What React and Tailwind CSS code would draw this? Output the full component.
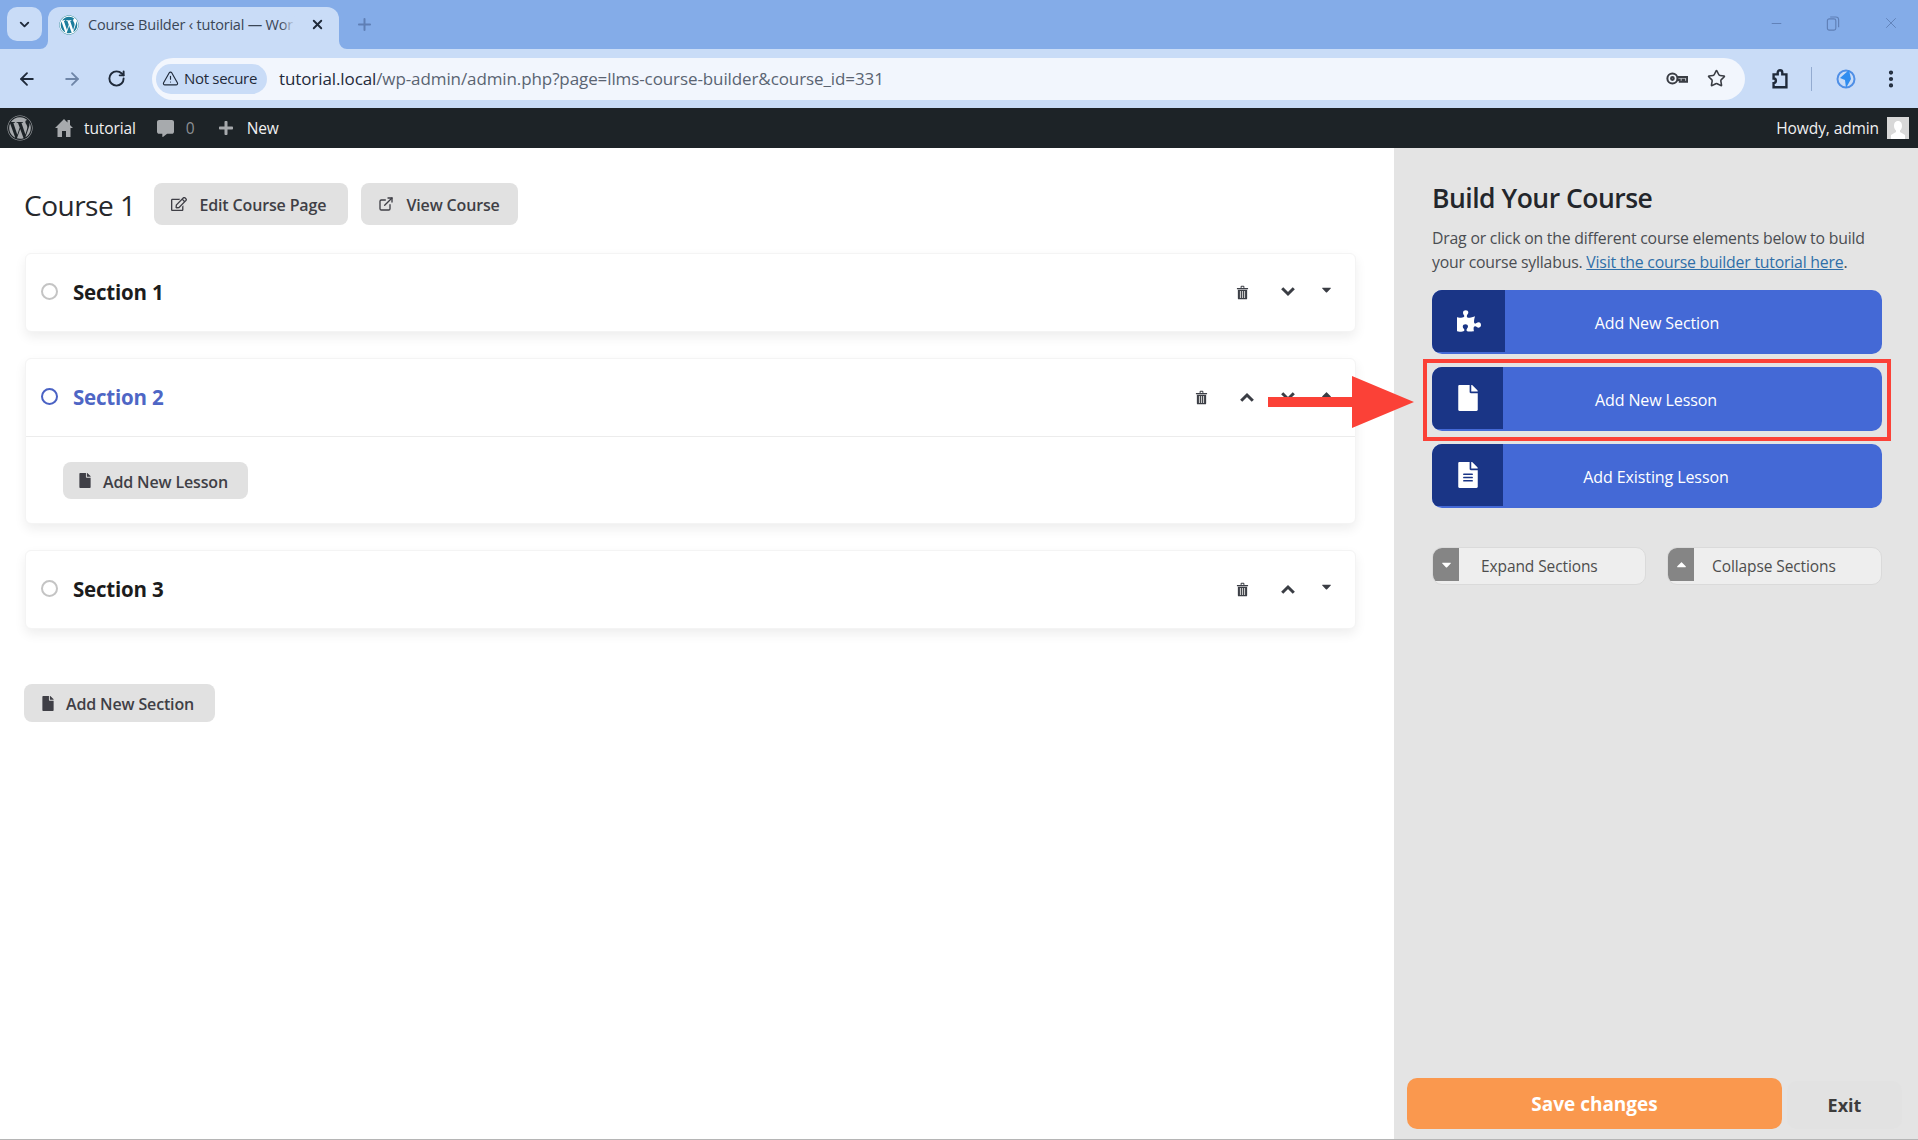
import React from 'react';
import { ArrowLeft, ArrowRight, RotateCw, TriangleAlert, ChevronDown, X, Plus, Star, Minus, EllipsisVertical, ExternalLink } from 'lucide-react';
import { FaWordpress, FaPuzzlePiece, FaFile, FaFileAlt, FaCaretDown, FaCaretUp, FaRegEdit, FaPlus, FaCommentAlt } from 'react-icons/fa';

const font = "font-['Open_Sans','Noto_Sans',sans-serif]";

const TrashIcon = () => (
  <svg viewBox="0 0 14 16" className="w-[13px] h-[15px]">
    <path d="M1 3.2h12v1.4H1zM5 3.2V1.600C5 1 5.400.7 6 .7h2c.6 0 1 .3 1 .9v1.600H8V1.800H6v1.400z" fill="#3c3f46" />
    <path d="M2 5h10v9.400c0 .6-.4 1-1 1H3c-.6 0-1-.4-1-1z" fill="#3c3f46" />
    <path d="M4.200 6.400h1.200v7.400H4.200zM6.400 6.400h1.200v7.400H6.400zM8.600 6.400h1.200v7.400H8.600z" fill="#c9c9c9" />
  </svg>
);

const Chevron = ({ up }) => (
  <svg viewBox="0 0 14 10" className="h-[10px] w-[14px]" fill="none" stroke="currentColor" strokeWidth="3">
    <path d={up ? 'M1.200 8.800 7 3l5.800 5.800' : 'M1.200 1.200 7 7l5.800-5.800'} />
  </svg>
);

const sections = [
  { name: 'Section 1', arrows: ['down'] },
  { name: 'Section 2', arrows: ['up', 'down'], open: true },
  { name: 'Section 3', arrows: ['up'] },
];

const GreyButton = ({ icon, label, className = '' }) => (
  <button className={`flex items-center gap-[12px] rounded-lg bg-[#e1e1e1] text-[16px] font-semibold tracking-[-0.15px] text-[#3f3f46] ${className}`}>
    {icon}
    <span className="pt-[2px]">{label}</span>
  </button>
);

const SectionCard = ({ section }) => (
  <div className="rounded-md bg-white border border-[#f4f4f4] shadow-[0_5px_12px_rgba(0,0,0,0.07)]">
    <div className={`flex items-center pl-[15px] pr-[17px] ${section.open ? 'h-[78px] border-b border-[#ececec]' : 'h-[77px]'}`}>
      <span className={`h-[17px] w-[17px] rounded-full -mt-[2px] ${section.open ? 'border-2 border-[#4a62c4]' : 'border-2 border-[#c4c4c4]'}`} />
      <span className={`ml-[15px] text-[20.5px] font-bold tracking-[-0.2px] ${section.open ? 'text-[#4e66c5]' : 'text-[#1c1c1c]'}`}>{section.name}</span>
      <div className="ml-auto flex items-center text-[#3a3d44]">
        <span className="flex w-6 justify-center"><TrashIcon /></span>
        {section.arrows.map((a, i) => (
          <span key={a} className={`flex w-6 justify-center -mt-[2px] ${i === 0 ? 'ml-[22px]' : 'ml-[17px]'}`}>
            <Chevron up={a === 'up'} />
          </span>
        ))}
        <span className="ml-[14px] flex w-6 justify-center -mt-[6px]">
          {section.open ? <FaCaretUp className="h-[15px] w-[15px]" /> : <FaCaretDown className="h-[15px] w-[15px]" />}
        </span>
      </div>
    </div>
    {section.open && (
      <div className="h-[86px] pl-[37px] pt-[25px]">
        <GreyButton icon={<FaFile className="h-[15px] w-[12px]" />} label="Add New Lesson" className="h-[37px] w-[185px] pl-[16px]" />
      </div>
    )}
  </div>
);

const BlueButton = ({ icon, label, iconWidth }) => (
  <button className="flex h-[64px] overflow-hidden rounded-[10px] bg-[#4469d6] text-white">
    <span className={`flex h-[62px] items-center justify-center bg-[#1a3586] ${iconWidth}`}>{icon}</span>
    <span className="flex h-full flex-1 items-center justify-center pr-[73px] pt-[2px] text-[16px] tracking-[-0.1px]">{label}</span>
  </button>
);

const ToggleButton = ({ icon, label, width, pad }) => (
  <button className={`flex h-[38px] overflow-hidden rounded-[10px] border border-[#dadada] bg-[#eeeeee] text-[15.5px] tracking-[-0.1px] text-[#4d4d4d] ${width}`}>
    <span className="flex h-[33px] w-[26px] items-center justify-center bg-[#858585] text-white">{icon}</span>
    <span className={`pt-[7px] ${pad}`}>{label}</span>
  </button>
);

export default function App() {
  return (
    <div className={`relative flex h-[1140px] w-[1918px] flex-col overflow-hidden bg-white ${font}`}>
      {/* browser tabs */}
      <div className="flex h-[49px] shrink-0 items-end bg-[#84ace8] pl-[7px]">
        <div className="mb-[8px] flex h-[34px] w-[35px] items-center justify-center rounded-[10px] bg-[#c9dcf7]">
          <ChevronDown className="h-[15px] w-[15px] text-[#1f2a3a]" strokeWidth={3} />
        </div>
        <div className="relative ml-[6px] flex h-[42px] w-[291px] items-center rounded-t-[12px] bg-[#c9dcf7] pb-[7px] pl-[11px] pr-[14px]">
          <svg viewBox="0 0 8 8" className="absolute -left-[8px] bottom-0 h-[8px] w-[8px]"><path d="M8 0v8H0a8 8 0 0 0 8-8z" fill="#c9dcf7" /></svg>
          <svg viewBox="0 0 8 8" className="absolute -right-[8px] bottom-0 h-[8px] w-[8px]"><path d="M0 0v8h8a8 8 0 0 1-8-8z" fill="#c9dcf7" /></svg>
          <span className="rounded-full bg-white"><FaWordpress className="h-[20px] w-[20px] text-[#1c7d9c]" /></span>
          <span className="relative ml-[9px] w-[207px] overflow-hidden whitespace-nowrap text-[14.5px] tracking-[-0.2px] text-[#3a4656]">
            Course Builder ‹ tutorial — Wor
            <span className="absolute inset-y-0 right-0 w-[14px] bg-gradient-to-r from-transparent to-[#c9dcf7]" />
          </span>
          <X className="ml-auto h-[15px] w-[15px] text-[#1f2a3a]" strokeWidth={3} />
        </div>
        <Plus className="mb-[15px] ml-[16px] h-[19px] w-[19px] text-[#5f7fb5]" strokeWidth={2.5} />
        <div className="mb-[17px] ml-auto flex items-center gap-[42px] pr-[18px] text-[#5f7fb5]">
          <Minus className="h-[15px] w-[15px]" strokeWidth={1.5} />
          <svg viewBox="0 0 14 16" className="h-[15px] w-[14px]" fill="none" stroke="currentColor" strokeWidth="1.2"><rect x="1" y="3" width="9" height="12" rx="2" /><path d="M4 1h6c2 0 3 1 3 3v8" /></svg>
          <X className="h-[18px] w-[18px]" strokeWidth={1.2} />
        </div>
      </div>

      {/* browser toolbar */}
      <div className="flex h-[59px] shrink-0 items-center bg-[#c9dcf7] pl-[17px]">
        <ArrowLeft className="h-[20px] w-[20px] text-[#1f2a3a]" strokeWidth={2.2} />
        <ArrowRight className="ml-[25px] h-[20px] w-[20px] text-[#6f86a8]" strokeWidth={2.2} />
        <RotateCw className="ml-[25px] h-[19px] w-[19px] text-[#1f2a3a]" strokeWidth={2.4} />
        <div className="ml-[26px] flex h-[42px] w-[1593px] items-center rounded-full bg-[#f2f6fd] pl-[4px] pr-[19px]">
          <div className="flex h-[30px] w-[111px] items-center gap-[5px] rounded-full bg-[#c9dcf7] pl-[6px] text-[15px] tracking-[-0.3px] text-[#1f2a3a]">
            <TriangleAlert className="h-[17px] w-[17px]" strokeWidth={1.6} />
            Not secure
          </div>
          <span className="ml-[12px] text-[17px] tracking-[-0.1px] text-[#5a6472]"><span className="text-[#1f2a3a]">tutorial.local</span>/wp-admin/admin.php?page=llms-course-builder&amp;course_id=331</span>
          <svg viewBox="0 0 24 16" className="ml-auto h-[15px] w-[22px]" fill="none" stroke="#3a3d44" strokeWidth="2.200"><circle cx="7" cy="8" r="5.500" /><circle cx="7" cy="8" r="1.500" /><path d="M12.500 6.500H23v5h-3v-2h-2v2h-3V9.500h-2.500" /></svg>
          <Star className="ml-[19px] h-[19px] w-[19px] text-[#3a3d44]" strokeWidth={2} />
        </div>
        <svg viewBox="0 0 24 24" className="ml-[24px] h-[22px] w-[22px]" fill="none" stroke="#1f2a3a" strokeWidth="2.600">
          <path d="M5 7h4.500V5a2.500 2.500 0 0 1 5 0v2H19v14H5v-4.500a2.500 2.500 0 0 0 0-5z" />
        </svg>
        <span className="ml-[20px] h-[24px] w-px bg-[#93abd0]" />
        <svg viewBox="0 0 20 20" className="ml-[24px] h-[20px] w-[20px]"><circle cx="10" cy="10" r="8.500" fill="none" stroke="#4f8fe6" strokeWidth="2" /><path d="M13 1 15 10 10 19 9 11 4 9z" fill="#2f8df0" /></svg>
        <EllipsisVertical className="ml-[24px] h-[22px] w-[22px] text-[#1f2a3a]" strokeWidth={2.6} />
      </div>

      {/* wp admin bar */}
      <div className="flex h-[40px] shrink-0 items-center bg-[#1d2327] pl-[7px] pr-[9px] text-[15.5px] tracking-[-0.1px] text-[#f0f0f1]">
        <FaWordpress className="h-[26px] w-[26px] text-[#a7aaad]" />
        <svg viewBox="0 0 20 20" className="ml-[21px] h-[20px] w-[20px]" fill="#a7aaad"><path d="M10 1 1 10h2.500v9H8v-6h4v6h4.500v-9H19l-3-3V2h-2.500v2.500z" /></svg>
        <span className="ml-[10px] pt-[2px]">tutorial</span>
        <FaCommentAlt className="ml-[21px] h-[17px] w-[17px] text-[#a7aaad]" />
        <span className="ml-[12px] pt-[2px] text-[#8c8f94]">0</span>
        <FaPlus className="ml-[23px] h-[16px] w-[16px] text-[#a7aaad]" />
        <span className="ml-[13px] pt-[2px]">New</span>
        <span className="ml-auto pt-[2px]">Howdy, admin</span>
        <span className="ml-[8px] flex h-[22px] w-[22px] items-end justify-center bg-[#d8d8d8]">
          <svg viewBox="0 0 20 20" className="h-[20px] w-[20px]"><path d="M10 2c3 0 4 2.500 4 5 0 2-1 3.500-2 4.500v1.500l5 3v4H3v-4l5-3v-1.500C7 10.500 6 9 6 7c0-2.500 1-5 4-5z" fill="#fff" /></svg>
        </span>
      </div>

      <div className="flex flex-1">
        {/* course outline */}
        <div className="flex-1 pl-[25px] pr-[38px] pt-[35px]">
          <div className="flex h-[42px] items-center">
            <h1 className="-ml-px pt-[2px] text-[28px] font-normal tracking-[-0.5px] text-[#26282c]">Course 1</h1>
            <GreyButton icon={<FaRegEdit className="h-[16px] w-[16px]" />} label="Edit Course Page" className="ml-[19px] h-[42px] w-[194px] pl-[17px]" />
            <GreyButton icon={<ExternalLink className="h-[16px] w-[16px]" />} label="View Course" className="ml-[13px] h-[42px] w-[157px] pl-[17px]" />
          </div>
          <div className="mt-[28px] flex flex-col gap-[26px]">
            {sections.map((s) => <SectionCard key={s.name} section={s} />)}
          </div>
          <GreyButton icon={<FaFile className="h-[15px] w-[12px]" />} label="Add New Section" className="-ml-px mt-[55px] h-[38px] w-[191px] pl-[18px]" />
        </div>

        {/* builder sidebar */}
        <aside className="flex w-[524px] flex-col bg-[#e4e4e4] pl-[38px] pr-[36px] pt-[32px]">
          <h2 className="text-[26.5px] font-semibold leading-[36px] tracking-[-0.5px] text-[#23262b]">Build Your Course</h2>
          <p className="mt-[10px] text-[15.8px] leading-[24px] tracking-[-0.2px] text-[#4a4d52]">
            Drag or click on the different course elements below to build your course syllabus. <a className="text-[#2f6fa8] underline">Visit the course builder tutorial here</a>.
          </p>
          <div className="mt-[16px] flex flex-col gap-[13px]">
            <BlueButton icon={<FaPuzzlePiece className="h-[24px] w-[24px]" />} label="Add New Section" iconWidth="w-[73px]" />
            <BlueButton icon={<FaFile className="h-[26px] w-[22px]" />} label="Add New Lesson" iconWidth="w-[71px]" />
            <BlueButton icon={<FaFileAlt className="h-[26px] w-[22px]" />} label="Add Existing Lesson" iconWidth="w-[71px]" />
          </div>
          <div className="mt-[39px] flex justify-between">
            <ToggleButton icon={<FaCaretDown className="h-[15px] w-[15px]" />} label="Expand Sections" width="w-[214px]" pad="pl-[22px]" />
            <ToggleButton icon={<FaCaretUp className="h-[15px] w-[15px]" />} label="Collapse Sections" width="w-[215px]" pad="pl-[18px]" />
          </div>
          <div className="mt-auto -ml-[25px] -mr-[20px] mb-[11px] flex">
            <button className="h-[51px] w-[375px] rounded-[10px] bg-[#fa984e] pt-[2px] text-[19px] font-bold text-white">Save changes</button>
            <button className="ml-[5px] mt-[3px] h-[48px] w-[115px] rounded-[10px] bg-[#e2e2e2] text-[18px] font-bold text-[#3c3c3c]">Exit</button>
          </div>
        </aside>
      </div>
      <div className="absolute inset-x-0 bottom-0 h-px bg-[#b5b5b5]" />

      {/* tutorial annotation */}
      <div className="absolute left-[1423px] top-[359px] h-[82px] w-[468px] border-[4px] border-[#fb4137]" />
      <svg viewBox="0 0 146 52" className="absolute left-[1268px] top-[376px] h-[52px] w-[146px]">
        <path d="M0 21h84V0l62 26-62 26V31H0z" fill="#fb4137" />
      </svg>
    </div>
  );
}
